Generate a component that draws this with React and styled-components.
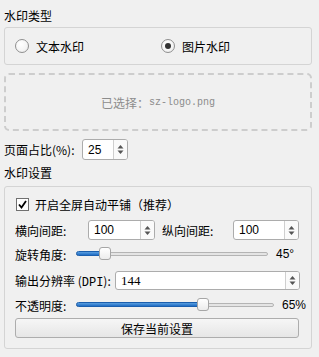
import React from 'react';
import styled, { createGlobalStyle } from 'styled-components';

const GlobalStyle = createGlobalStyle`
	html, body {
		margin: 0;
		padding: 0;
		background: #f0f0f0;
	}
	body {
		font-family: "Noto Sans CJK SC", "Liberation Sans", sans-serif;
		font-size: 12px;
		color: #000;
	}
`;

const Page = styled.div`
	width: 308px;
	padding: 8px 7px 0 4px;
`;

const SectionTitle = styled.div`
	height: 16px;
	line-height: 16px;
	margin-top: ${(p) => p.top || 0}px;
	margin-bottom: ${(p) => p.bottom || 0}px;
`;

const GroupBox = styled.div`
	border: 1px solid #d4d4d4;
	border-radius: 3px;
	box-sizing: border-box;
`;

const RadioGroup = styled(GroupBox)`
	height: 38px;
	display: grid;
	grid-template-columns: 146px 1fr;
	align-items: center;
	padding-left: 10px;
`;

const RadioItem = styled.label`
	display: flex;
	align-items: center;
	gap: 7px;
`;

const RadioCircle = styled.span`
	width: 12px;
	height: 12px;
	border-radius: 50%;
	border: 1px solid #8f8f8f;
	background: radial-gradient(circle at 40% 35%, #fff 0%, #f4f4f4 60%, #e2e2e2 100%);
	display: flex;
	align-items: center;
	justify-content: center;

	&::after {
		content: '';
		width: 6px;
		height: 6px;
		border-radius: 50%;
		background: ${(p) => (p.checked ? '#333' : 'transparent')};
	}
`;

const DropZone = styled.div`
	margin-top: 8px;
	height: 58px;
	box-sizing: border-box;
	border: 2px dashed #cdcdcd;
	border-radius: 5px;
	display: flex;
	align-items: center;
	justify-content: center;
	color: #8c8c8c;
`;

const Mono = styled.span`
	font-family: "Liberation Mono", monospace;
	font-size: ${(p) => p.size || 10}px;
`;

const Row = styled.div`
	display: flex;
	align-items: center;
	height: ${(p) => p.h || 20}px;
	margin-top: ${(p) => p.top || 0}px;
`;

const Label = styled.span`
	width: ${(p) => p.w}px;
	padding-left: ${(p) => p.pad || 0}px;
	box-sizing: border-box;
	flex: none;
	white-space: nowrap;
`;

const SpinBox = styled.div`
	width: ${(p) => p.w}px;
	height: ${(p) => p.h || 20}px;
	flex: none;
	box-sizing: border-box;
	border: 1px solid #acacac;
	border-radius: 3px;
	background: #fff;
	display: flex;
`;

const SpinValue = styled.span`
	flex: 1;
	display: flex;
	align-items: center;
	padding-left: 5px;
	font-family: ${(p) => (p.serif ? '"Liberation Serif", serif' : '"Liberation Sans", sans-serif')};
	font-size: ${(p) => (p.serif ? 13 : 12)}px;
`;

const SpinArrows = styled.span`
	width: 13px;
	border-left: 1px solid #cfcfcf;
	display: flex;
	align-items: center;
	justify-content: center;
	background: #fafafa;
	border-radius: 0 2px 2px 0;
`;

const SettingsBox = styled(GroupBox)`
	padding: 8px 12px 10px 10px;
	display: flex;
	flex-direction: column;
`;

const CheckItem = styled.label`
	display: flex;
	align-items: center;
	gap: 6px;
	padding-left: 1px;
`;

const CheckSquare = styled.span`
	width: 13px;
	height: 13px;
	box-sizing: border-box;
	border: 1px solid #707070;
	background: #fff;
	display: flex;
	align-items: center;
	justify-content: center;
`;

const SliderArea = styled.div`
	flex: 1;
	position: relative;
	height: 18px;
	margin-right: 8px;
`;

const Track = styled.div`
	position: absolute;
	left: 0;
	right: 0;
	top: 7px;
	height: 4px;
	border-radius: 2px;
	box-sizing: border-box;
	border: 1px solid #b4b4b4;
	background: #e4e4e4;
`;

const TrackFill = styled.div`
	position: absolute;
	left: 0;
	top: 6px;
	height: 5px;
	border-radius: 3px;
	background: linear-gradient(#5a9fe0, #1f6cc4);
	border: 1px solid #1b5fae;
	box-sizing: border-box;
`;

const Handle = styled.div`
	position: absolute;
	top: 2px;
	width: 12px;
	height: 13px;
	margin-left: -6px;
	box-sizing: border-box;
	border: 1px solid #a6a6a6;
	border-radius: 3px;
	background: linear-gradient(#ffffff, #ececec);
`;

const SliderValue = styled.span`
	width: ${(p) => p.w}px;
	flex: none;
	font-family: "Liberation Sans", sans-serif;
	font-size: 12px;
`;

const Button = styled.button`
	margin-top: 4px;
	height: 20px;
	padding: 0;
	box-sizing: border-box;
	border: 1px solid #adadad;
	border-radius: 3px;
	background: linear-gradient(#f6f6f6, #e6e6e6);
	font: inherit;
	color: #000;
`;

function Arrows() {
	return (
		<SpinArrows>
			<svg width="7" height="11" viewBox="0 0 7 11">
				<path d="M3.5 1 L6.5 4.5 L0.5 4.5 Z" fill="#555" />
				<path d="M3.5 10 L6.5 6.5 L0.5 6.5 Z" fill="#555" />
			</svg>
		</SpinArrows>
	);
}

function Spin({ w, h, value, serif }) {
	return (
		<SpinBox w={w} h={h}>
			<SpinValue serif={serif}>{value}</SpinValue>
			<Arrows />
		</SpinBox>
	);
}

function Slider({ value, min, max }) {
	const pct = (value - min) / (max - min);
	const pos = `calc(6px + (100% - 12px) * ${pct})`;
	return (
		<SliderArea>
			<Track />
			<TrackFill style={{ width: pos }} />
			<Handle style={{ left: pos }} />
		</SliderArea>
	);
}

export default function App() {
	return (
		<Page>
			<GlobalStyle />
			<SectionTitle bottom={3}>水印类型</SectionTitle>
			<RadioGroup>
				<RadioItem>
					<RadioCircle />
					文本水印
				</RadioItem>
				<RadioItem>
					<RadioCircle checked />
					图片水印
				</RadioItem>
			</RadioGroup>
			<DropZone>
				已选择：<Mono>sz-logo.png</Mono>
			</DropZone>
			<Row top={8} h={21}>
				<Label w={78}>页面占比(%):</Label>
				<Spin w={46} h={21} value="25" />
			</Row>
			<SectionTitle top={5} bottom={5}>水印设置</SectionTitle>
			<SettingsBox>
				<Row h={18}>
					<CheckItem>
						<CheckSquare>
							<svg width="9" height="9" viewBox="0 0 9 9">
								<path d="M1 4.5 L3.5 7.5 L8 1" stroke="#000" strokeWidth="1.8" fill="none" />
							</svg>
						</CheckSquare>
						开启全屏自动平铺（推荐）
					</CheckItem>
				</Row>
				<Row top={7} h={20}>
					<Label w={73}>横向间距:</Label>
					<Spin w={67} value="100" />
					<Label w={78} pad={7}>纵向间距:</Label>
					<Spin w={66} value="100" />
				</Row>
				<Row top={5} h={18}>
					<Label w={61}>旋转角度:</Label>
					<Slider value={45} min={0} max={360} />
					<SliderValue w={23}>45°</SliderValue>
				</Row>
				<Row top={8} h={19}>
					<Label w={100}>输出分辨率 (<Mono size={12}>DPI</Mono>):</Label>
					<Spin w={185} h={19} value="144" serif />
				</Row>
				<Row top={6} h={18}>
					<Label w={61}>不透明度:</Label>
					<Slider value={65} min={0} max={100} />
					<SliderValue w={17}>65%</SliderValue>
				</Row>
				<Button>保存当前设置</Button>
			</SettingsBox>
		</Page>
	);
}
